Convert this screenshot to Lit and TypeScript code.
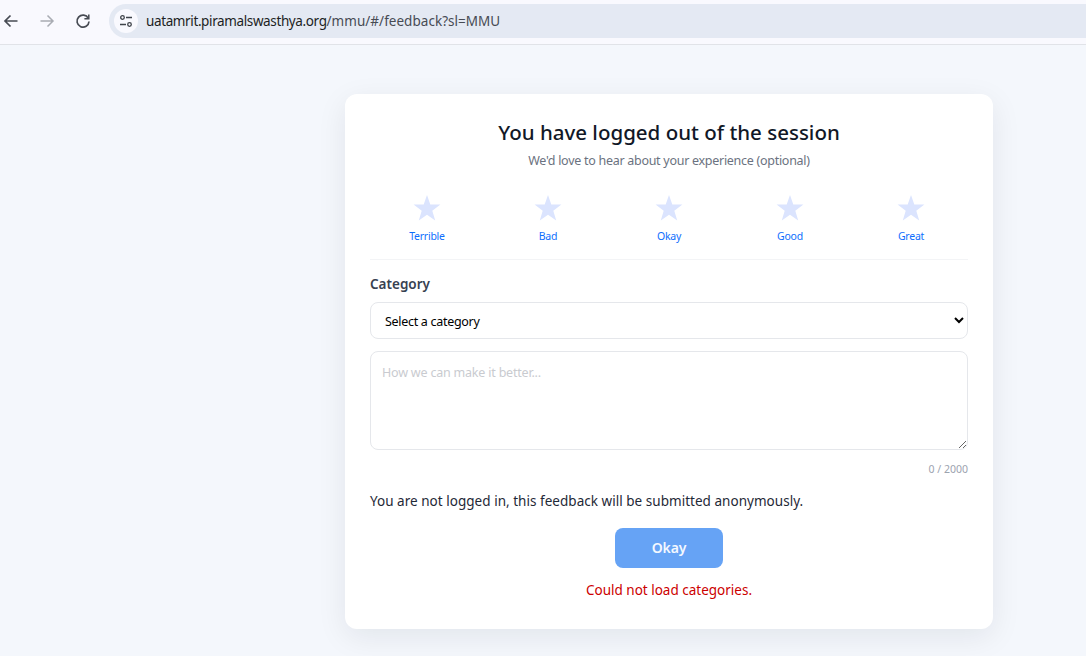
import { LitElement, html, css } from 'lit';
import { customElement } from 'lit/decorators.js';

const RATINGS = ['Terrible', 'Bad', 'Okay', 'Good', 'Great'];

@customElement('app-root')
export class AppRoot extends LitElement {
  static styles = css`
    :host {
      display: block;
      width: 1086px;
      height: 656px;
      overflow: hidden;
      background: #f4f7fc;
      font-family: 'Noto Sans', 'Open Sans', sans-serif;
      color: #111827;
    }
    .toolbar {
      height: 44px;
      box-sizing: content-box;
      display: flex;
      align-items: flex-start;
      background: #f9f9fe;
      border-bottom: 1px solid #e1e3e8;
    }
    .nav {
      display: flex;
      width: 109px;
      height: 34px;
      margin-top: 4px;
      align-items: center;
      flex: none;
      padding-left: 2px;
      box-sizing: border-box;
      gap: 18px;
    }
    .nav svg {
      width: 18px;
      height: 18px;
      flex: none;
    }
    .omnibox {
      flex: 1;
      height: 34px;
      margin-top: 4px;
      background: #e4e9f3;
      border-radius: 17px 0 0 17px;
      display: flex;
      align-items: center;
      padding-left: 5px;
      gap: 8px;
      font-size: 13.5px;
      letter-spacing: 0.03px;
      color: #474b53;
    }
    .tune {
      width: 24px;
      height: 24px;
      border-radius: 50%;
      background: #f9f9fe;
      display: flex;
      align-items: center;
      justify-content: center;
    }
    .host {
      color: #1d1f24;
      letter-spacing: -0.38px;
    }
    .page {
      padding: 49px 0 0 345px;
    }
    .card {
      width: 648px;
      height: 535px;
      box-sizing: border-box;
      padding: 23px 25px 0;
      background: #fff;
      border-radius: 12px;
      box-shadow: 0 8px 30px rgba(15, 23, 42, 0.08);
    }
    h1 {
      margin: 0;
      font-size: 20.5px;
      line-height: 30px;
      font-weight: 500;
      text-align: center;
      color: #111827;
    }
    .sub {
      margin: 5px 0 0;
      font-size: 12.5px;
      line-height: 18px;
      letter-spacing: -0.28px;
      text-align: center;
      color: #6b7280;
    }
    .ratings {
      display: grid;
      grid-template-columns: repeat(5, 1fr);
      gap: 7px;
      margin-top: 24px;
      padding-bottom: 15px;
      border-bottom: 1px solid #f3f4f6;
    }
    .rating {
      display: flex;
      flex-direction: column;
      align-items: center;
      font-size: 10.5px;
      line-height: 15px;
      letter-spacing: -0.25px;
      color: #0d6efd;
    }
    .rating svg {
      width: 28px;
      height: 28px;
      display: block;
      margin-bottom: 7px;
    }
    label {
      display: block;
      margin-top: 14px;
      font-size: 13.5px;
      line-height: 20px;
      font-weight: 600;
      color: #374151;
    }
    select {
      display: block;
      width: 100%;
      height: 37px;
      margin-top: 8px;
      padding: 2px 10px 0;
      box-sizing: border-box;
      background: #fff;
      border: 1px solid #e5e7eb;
      border-radius: 8px;
      font: inherit;
      font-size: 12.5px;
      letter-spacing: -0.3px;
      color: #000;
    }
    textarea {
      display: block;
      width: 100%;
      height: 99px;
      margin-top: 12px;
      padding: 12px 11px 10px;
      box-sizing: border-box;
      border: 1px solid #e5e7eb;
      border-radius: 8px;
      font: inherit;
      font-size: 12.5px;
      letter-spacing: -0.2px;
      outline: none;
    }
    textarea::placeholder {
      color: #c9cbd0;
    }
    .count {
      margin-top: 12px;
      font-size: 10.5px;
      line-height: 14px;
      text-align: right;
      color: #9ca3af;
    }
    .anon {
      margin: 15px 0 0;
      font-size: 13.5px;
      line-height: 20px;
      letter-spacing: 0.03px;
      color: #1f2937;
    }
    .actions {
      display: flex;
      justify-content: center;
      margin-top: 17px;
    }
    button {
      width: 108px;
      height: 40px;
      padding: 0 0 2px;
      border: none;
      border-radius: 8px;
      background: #66a3f5;
      color: #f4f8ff;
      font: inherit;
      font-size: 14px;
      font-weight: 600;
      letter-spacing: -0.1px;
    }
    .error {
      margin: 12px 0 0;
      font-size: 13.5px;
      line-height: 20px;
      text-align: center;
      color: #cc0000;
    }
  `;

  private star() {
    return html`<svg viewBox="0 0 28 28">
      <polygon
        fill="#dbe4fe"
        points="14,1 17.3,10.6 27.4,10.6 19.3,16.8 22.2,26.6 14,20.8 5.8,26.6 8.7,16.8 0.6,10.6 10.7,10.6"
      ></polygon>
    </svg>`;
  }

  render() {
    return html`
      <div class="toolbar">
        <div class="nav">
          <svg viewBox="0 0 18 18" fill="none" stroke="#474b53" stroke-width="1.7">
            <path d="M15.5 9H3M8.5 3.5 3 9l5.500 5.500"></path>
          </svg>
          <svg viewBox="0 0 18 18" fill="none" stroke="#a9acb3" stroke-width="1.500">
            <path d="M2.500 9H15M9.500 3.500 15 9l-5.500 5.500"></path>
          </svg>
          <svg viewBox="0 0 18 18" fill="none" stroke="#474b53" stroke-width="1.700">
            <path d="M14.300 6.300A6 6 0 1 0 15 9.500"></path>
            <path d="M14.800 2.400v4.400h-4.400" stroke-width="1.500"></path>
          </svg>
        </div>
        <div class="omnibox">
          <span class="tune">
            <svg width="14" height="14" viewBox="0 0 14 14" fill="none" stroke="#3f434a" stroke-width="1.300">
              <circle cx="3.500" cy="3.500" r="1.800"></circle>
              <path d="M7 3.500h6M1 10.500h6"></path>
              <circle cx="10.500" cy="10.500" r="1.800"></circle>
            </svg>
          </span>
          <span><span class="host">uatamrit.piramalswasthya.org</span>/mmu/#/feedback?sl=MMU</span>
        </div>
      </div>
      <div class="page">
        <div class="card">
          <h1>You have logged out of the session</h1>
          <p class="sub">We'd love to hear about your experience (optional)</p>
          <div class="ratings">
            ${RATINGS.map((r) => html`<div class="rating">${this.star()}<span>${r}</span></div>`)}
          </div>
          <label>Category</label>
          <select>
            <option>Select a category</option>
          </select>
          <textarea placeholder="How we can make it better..."></textarea>
          <div class="count">0 / 2000</div>
          <p class="anon">You are not logged in, this feedback will be submitted anonymously.</p>
          <div class="actions"><button>Okay</button></div>
          <p class="error">Could not load categories.</p>
        </div>
      </div>
    `;
  }
}
